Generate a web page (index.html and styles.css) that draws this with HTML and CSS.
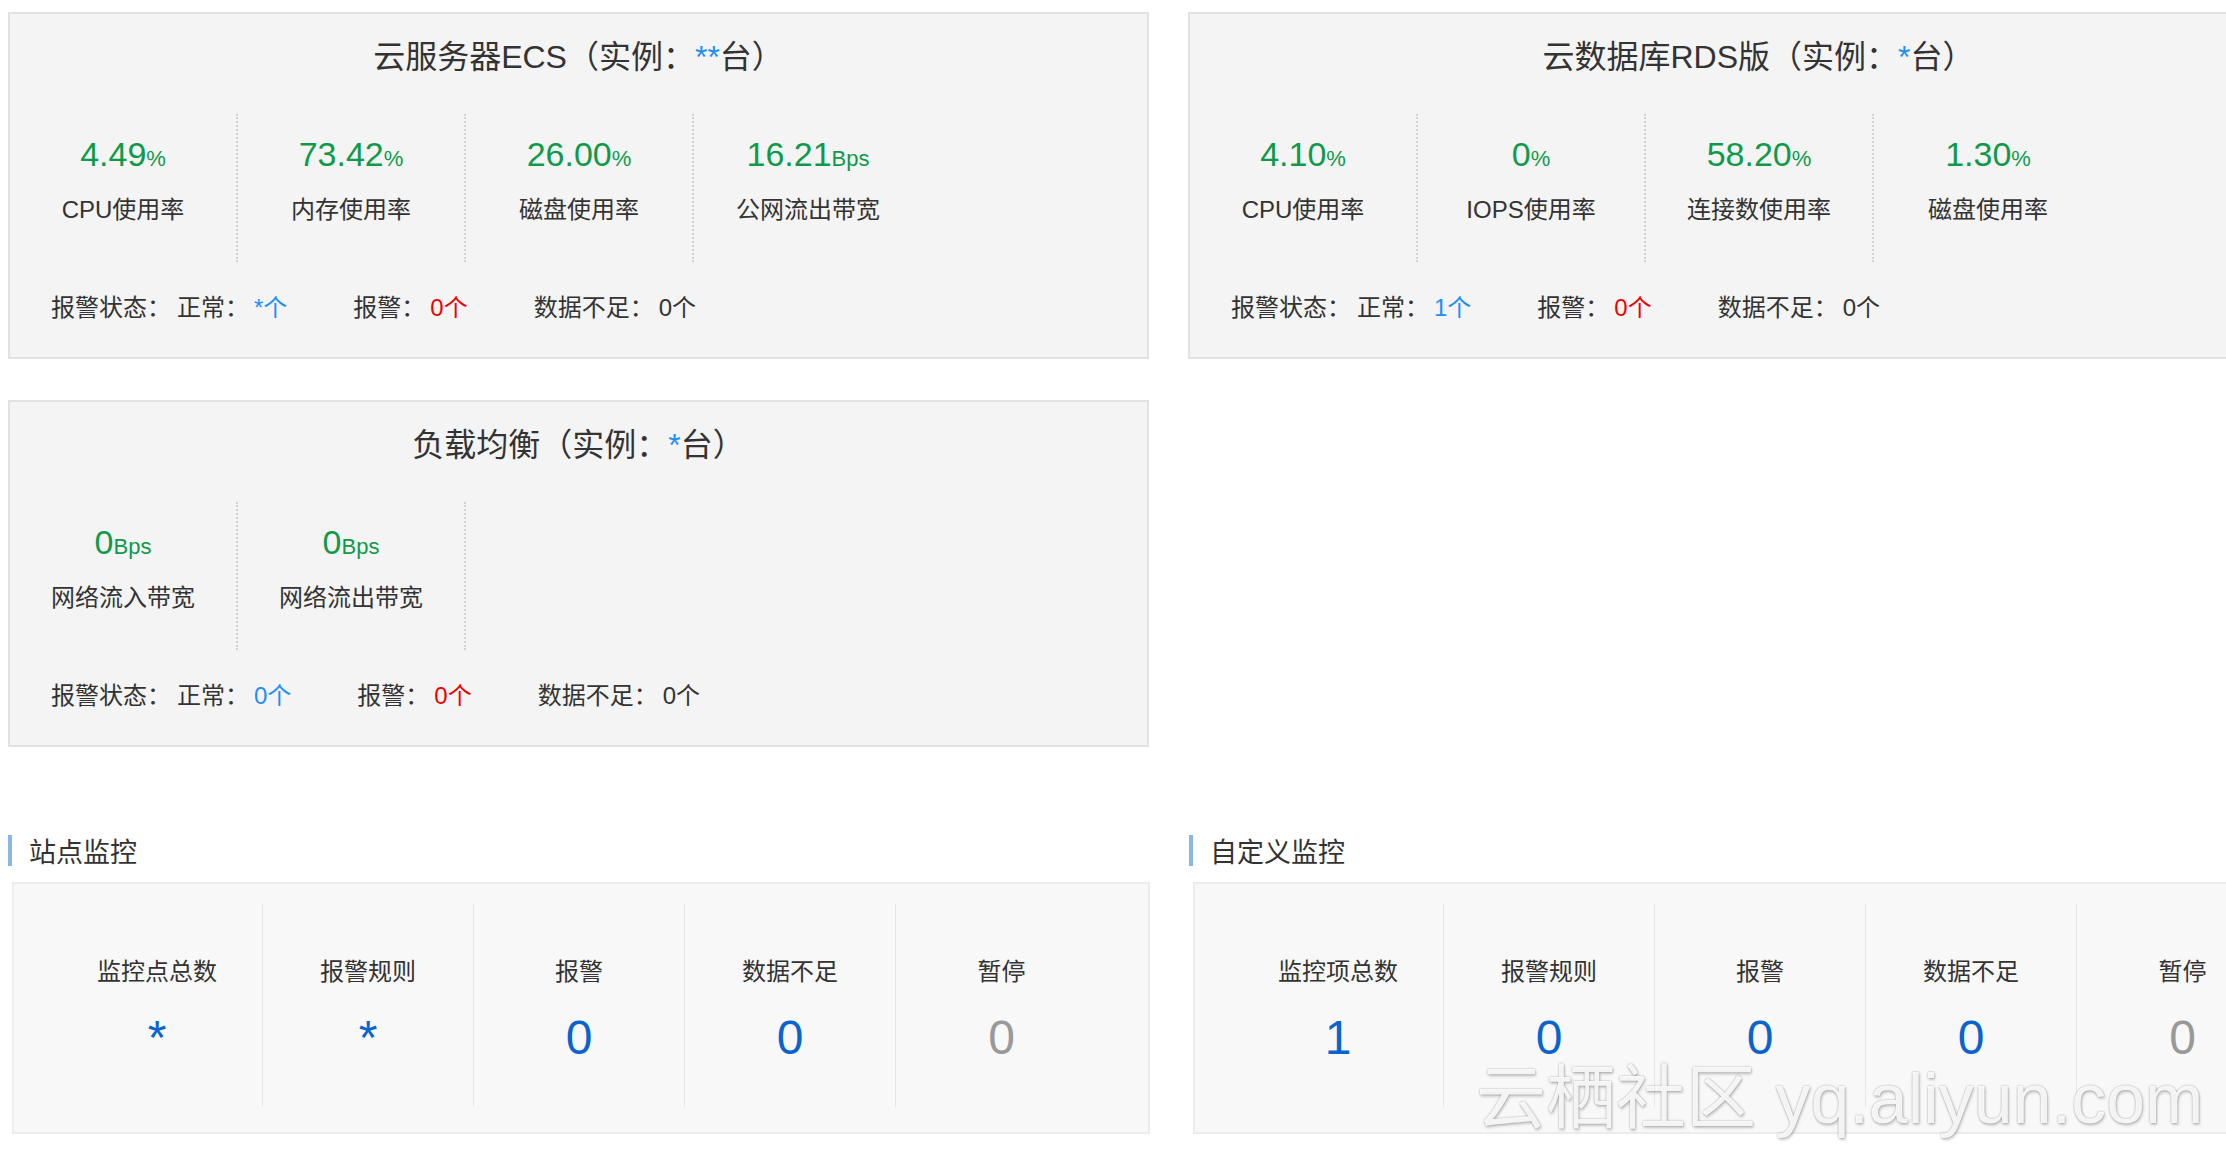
FILE: index.html
```html
<!DOCTYPE html>
<html lang="zh-CN">
<head>
<meta charset="utf-8">
<title>云监控概览</title>
<link rel="stylesheet" href="styles.css">
</head>
<body>
<div class="page">
  <div class="row">
    <div class="panel">
      <div class="panel-title">云服务器ECS（实例：<span class="hl">**</span>台）</div>
      <div class="metrics">
        <div class="metric"><div class="value">4.49<span class="unit">%</span></div><div class="label">CPU使用率</div></div>
        <div class="metric"><div class="value">73.42<span class="unit">%</span></div><div class="label">内存使用率</div></div>
        <div class="metric"><div class="value">26.00<span class="unit">%</span></div><div class="label">磁盘使用率</div></div>
        <div class="metric last"><div class="value">16.21<span class="unit">Bps</span></div><div class="label">公网流出带宽</div></div>
      </div>
      <div class="footer">
        <span class="item"><span class="k1">报警状态：</span><span class="k">正常：</span><span class="ok">*个</span></span>
        <span class="item"><span class="k">报警：</span><span class="bad">0个</span></span>
        <span class="item"><span class="k">数据不足：</span>0个</span>
      </div>
    </div>
    <div class="panel">
      <div class="panel-title">云数据库RDS版（实例：<span class="hl">*</span>台）</div>
      <div class="metrics">
        <div class="metric"><div class="value">4.10<span class="unit">%</span></div><div class="label">CPU使用率</div></div>
        <div class="metric"><div class="value">0<span class="unit">%</span></div><div class="label">IOPS使用率</div></div>
        <div class="metric"><div class="value">58.20<span class="unit">%</span></div><div class="label">连接数使用率</div></div>
        <div class="metric last"><div class="value">1.30<span class="unit">%</span></div><div class="label">磁盘使用率</div></div>
      </div>
      <div class="footer">
        <span class="item"><span class="k1">报警状态：</span><span class="k">正常：</span><span class="ok">1个</span></span>
        <span class="item"><span class="k">报警：</span><span class="bad">0个</span></span>
        <span class="item"><span class="k">数据不足：</span>0个</span>
      </div>
    </div>
  </div>

  <div class="row row-gap">
    <div class="panel">
      <div class="panel-title">负载均衡（实例：<span class="hl">*</span>台）</div>
      <div class="metrics">
        <div class="metric"><div class="value">0<span class="unit">Bps</span></div><div class="label">网络流入带宽</div></div>
        <div class="metric"><div class="value">0<span class="unit">Bps</span></div><div class="label">网络流出带宽</div></div>
      </div>
      <div class="footer">
        <span class="item"><span class="k1">报警状态：</span><span class="k">正常：</span><span class="ok">0个</span></span>
        <span class="item"><span class="k">报警：</span><span class="bad">0个</span></span>
        <span class="item"><span class="k">数据不足：</span>0个</span>
      </div>
    </div>
  </div>

  <div class="row section-row">
    <div class="section">
      <div class="sec-title">站点监控</div>
      <div class="stat-box">
        <div class="stat"><div class="stat-label">监控点总数</div><div class="stat-value">*</div></div>
        <div class="stat"><div class="stat-label">报警规则</div><div class="stat-value">*</div></div>
        <div class="stat"><div class="stat-label">报警</div><div class="stat-value">0</div></div>
        <div class="stat"><div class="stat-label">数据不足</div><div class="stat-value">0</div></div>
        <div class="stat"><div class="stat-label">暂停</div><div class="stat-value gray">0</div></div>
      </div>
    </div>
    <div class="section">
      <div class="sec-title">自定义监控</div>
      <div class="stat-box">
        <div class="stat"><div class="stat-label">监控项总数</div><div class="stat-value">1</div></div>
        <div class="stat"><div class="stat-label">报警规则</div><div class="stat-value">0</div></div>
        <div class="stat"><div class="stat-label">报警</div><div class="stat-value">0</div></div>
        <div class="stat"><div class="stat-label">数据不足</div><div class="stat-value">0</div></div>
        <div class="stat"><div class="stat-label">暂停</div><div class="stat-value gray">0</div></div>
      </div>
    </div>
  </div>
</div>
<div class="watermark">云栖社区 yq.aliyun.com</div>
</body>
</html>
```

FILE: styles.css
```css
html, body {
  margin: 0;
  padding: 0;
}
body {
  position: relative;
  width: 2226px;
  height: 1152px;
  overflow: hidden;
  background: #ffffff;
  color: #333333;
  font-family: "Liberation Sans", "Noto Sans CJK SC", sans-serif;
}
.page {
  padding: 12px 0 0 8px;
}
.row {
  display: flex;
  gap: 39px;
}
.row-gap {
  margin-top: 41px;
}
.panel {
  flex: 0 0 1141px;
  box-sizing: border-box;
  height: 347px;
  border: 2px solid #e2e2e2;
  background: #f4f4f4;
}
.panel-title {
  text-align: center;
  font-size: 32px;
  line-height: 40px;
  padding-top: 23px;
}
.hl {
  color: #1e8ff5;
}
.metrics {
  display: flex;
  height: 148px;
  margin-top: 37px;
}
.metric {
  width: 228px;
  box-sizing: border-box;
  border-right: 2px dotted #d2d2d2;
  text-align: center;
  padding-top: 20px;
}
.metric.last {
  border-right: none;
}
.value {
  font-size: 34px;
  line-height: 40px;
  color: #0f9a4a;
}
.unit {
  font-size: 22px;
}
.label {
  font-size: 24px;
  line-height: 30px;
  margin-top: 16px;
}
.footer {
  display: flex;
  gap: 66px;
  margin-top: 31px;
  padding-left: 41px;
  font-size: 24px;
  line-height: 30px;
}
.k1 {
  margin-right: 6px;
}
.k {
  margin-right: 5px;
}
.ok {
  color: #1e8ff5;
}
.bad {
  color: #f20000;
}
.section-row {
  margin-top: 88px;
}
.section {
  flex: 0 0 1141px;
}
.sec-title {
  border-left: 4px solid #88b8e2;
  padding-left: 17px;
  font-size: 27px;
  line-height: 37px;
  height: 31px;
}
.stat-box {
  display: flex;
  box-sizing: border-box;
  width: 1138px;
  height: 252px;
  margin: 16px 0 0 4px;
  padding: 20px 38px 25px;
  border: 2px solid #ececec;
  background: #f8f8f8;
}
.stat {
  width: 211px;
  box-sizing: border-box;
  border-right: 1px solid #e6e6e6;
  text-align: center;
  padding-top: 53px;
}
.stat:last-child {
  border-right: none;
}
.stat-label {
  font-size: 24px;
  line-height: 30px;
}
.stat-value {
  font-size: 48px;
  line-height: 56px;
  margin-top: 23px;
  color: #0b63ce;
}
.stat-value.gray {
  color: #999999;
}
.watermark {
  position: absolute;
  left: 1476px;
  top: 1062px;
  font-family: "Liberation Sans", "Noto Sans CJK SC", sans-serif;
  font-size: 70px;
  line-height: 74px;
  white-space: nowrap;
  color: rgba(255, 255, 255, 0.9);
  text-shadow: 0 0 2px rgba(0, 0, 0, 0.35), 1px 2px 3px rgba(0, 0, 0, 0.2);
}
```
